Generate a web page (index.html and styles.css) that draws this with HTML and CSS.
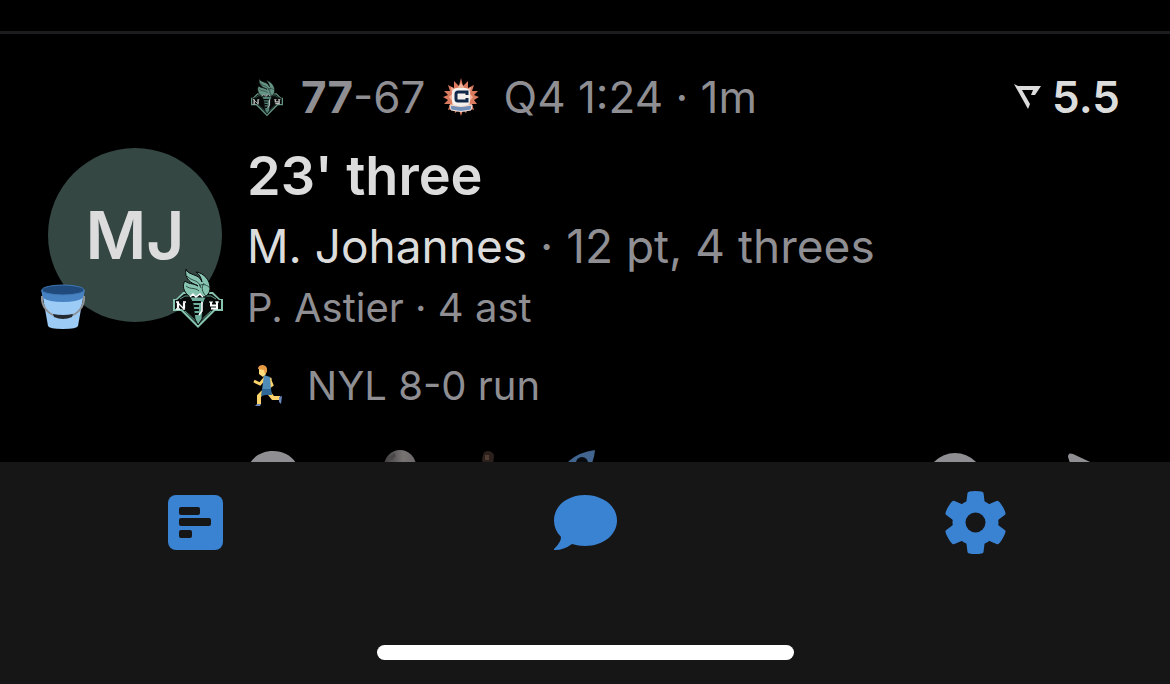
FILE: index.html
```html
<!DOCTYPE html>
<html lang="en">
<head>
<meta charset="utf-8">
<meta name="viewport" content="width=device-width, initial-scale=1">
<title>Plays</title>
<link rel="stylesheet" href="styles.css">
</head>
<body>
<svg class="defs" aria-hidden="true">
  <symbol id="liberty" viewBox="0 0 50 60">
    <path d="M10 24H40L47 31H50V43H42L25 60 8 43H0V31H3Z" fill="#86c4b0"/>
    <path d="M11 26H39L46 32H48V41H41L25 57 9 41H2V32H4Z" fill="#080a0a"/>
    <path d="M7 31L12 28H18M43 31L38 28H32M12 43L25 55 38 43" fill="none" stroke="#5c9a88"/>
    <path d="M5 40.500V34.500M11 40.500V34.500" fill="none" stroke="#fff" stroke-width="2.200"/>
    <path d="M4 34L11 41M3 34H6M10 34H13M3 41H7M10 41H12" fill="none" stroke="#fff" stroke-width="1.300"/>
    <path d="M38 34V37.500H44M44 33.500V40.500H38" fill="none" stroke="#fff" stroke-width="2"/>
    <path d="M36 34H40M42 34H46" stroke="#fff"/>
    <path d="M17 29H33L30 36 29 51 25 57 22 51 20 36Z" fill="#6fae9c" stroke="#080a0a"/>
    <path d="M19 34H28M21 38H26M21 42H26M22 46H26" stroke="#080a0a" stroke-width="2"/>
    <path d="M29 34V43L26 47" fill="none" stroke="#fff" stroke-width="1.500"/>
    <path d="M13 1C15 8 26 5 29 14C28 9 26 6 23 4C31 5 37 12 37 20C37 25 34 28 31 29L27 26 24 29 20 27 17 29C10 24 9 17 12 13C17 17 22 15 25 18C18 15 11 11 13 1Z" fill="#86c4b0" stroke="#080a0a"/>
    <path d="M14 8C19 14 26 11 28 20M26 18C30 15 34 17 37 20M31 15C28 20 29 24 33 28M13 18C18 22 22 19 26 23" fill="none" stroke="#16312b" stroke-width=".8"/>
    <path d="M17 29L20 26 23 29 27 26 30 29" fill="none" stroke="#fff" stroke-width="1.500"/>
  </symbol>
</svg>
<main class="feed">
  <div class="previous"></div>
  <article class="play">
    <div class="avatar">
      <span class="initials">MJ</span>
      <svg class="bucket" viewBox="0 0 46 46" role="img" aria-label="Bucket">
        <path d="M2 8H44L38 42Q37 45 23 45T8 42Z" fill="#9ccbf6"/>
        <path d="M1 6H45L43 14Q37 18 23 18T3 14Z" fill="#4783c3"/>
        <ellipse cx="23" cy="6" rx="21" ry="5" fill="#204a7b" stroke="#3f78b5"/>
        <path d="M2 12C1 22 8 30 16 32M44 12C45 22 38 30 30 32" fill="none" stroke="#8e9296" stroke-width="2"/>
        <path d="M13 30Q23 32 33 30L32 33Q23 37 14 33Z" fill="#252a30"/>
      </svg>
      <svg class="team-badge" role="img" aria-label="New York"><use href="#liberty"/></svg>
    </div>
    <div class="body">
      <header class="meta">
        <svg class="team home" role="img" aria-label="New York"><use href="#liberty"/></svg>
        <span class="score"><b>77</b>-67</span>
        <svg class="team away" viewBox="0 0 36 40" role="img" aria-label="Connecticut">
          <path d="M18 1L20 9 25 4 25 11 31 8 29 14 35 14 31 18 36 20 31 23 34 27 29 27 31 33 25 31 23 36 20 33 18 39 16 33 12 36 11 31 5 33 7 27 1 27 5 23 0 20 5 18 1 14 7 14 5 8 11 11 11 4 16 9Z" fill="#d9795d"/>
          <path d="M8 10L13 13 18 6 23 13 28 10 27 17 30 20 26 25 29 30H7L10 25 6 20 9 17Z" fill="#f0b49c"/>
          <rect x="9" y="11" width="18" height="18" rx="5" fill="#f4f1ed"/>
          <path d="M24 18V15H15Q13 15 13 17V22Q13 24 15 24H24V21" fill="none" stroke="#122849" stroke-width="3"/>
          <path d="M7 28Q18 31 29 28L28 33Q18 36 8 33Z" fill="#7190b9" stroke="#f2ddd5"/>
        </svg>
        <span class="clock">Q4 1:24 · 1m</span>
        <span class="impact">
          <svg class="impact-mark" viewBox="0 0 28 26" aria-hidden="true">
            <path d="M0 0L4 2H27L21 11H17L19 6H8L16 20 14 25Z" fill="#dcdcdc"/>
          </svg>
          5.5
        </span>
      </header>
      <h2 class="title">23' three</h2>
      <p class="player"><span class="name">M. Johannes</span> · 12 pt, 4 threes</p>
      <p class="assist">P. Astier · 4 ast</p>
      <p class="run">
        <svg class="runner" viewBox="0 0 30 42" aria-hidden="true">
          <path d="M12 13L7 19 1 16M17 13L18 22M16 13L19 20 15 23" fill="none" stroke="#fbd36a" stroke-width="3"/>
          <path d="M10 27L6 31 6 39M16 28L20 33H27" fill="none" stroke="#fbd36a" stroke-width="4"/>
          <path d="M11 10L17 12 18 25H9Z" fill="#4f8cba"/>
          <path d="M9 24H18L19 30 13 30 8 31Z" fill="#2f6796"/>
          <path d="M6 3H13V9L10 12 6 9Z" fill="#ffdc7c"/>
          <path d="M5 4Q5 0 10 0Q15 1 14 7L12 9 11 5Z" fill="#e79a45"/>
          <path d="M8 39L7 41H2L4 39ZM26 32L29 31 28 39 26 37Z" fill="#6c87bd"/>
        </svg>
        NYL 8-0 run
      </p>
      <div class="actions">
        <button class="act comment" aria-label="Comment"><svg viewBox="0 0 52 56"><path d="M26 1C41 1 52 11 52 25S41 49 26 49L16 47 2 54 7 42Q0 35 0 25C0 11 11 1 26 1Z" fill="#8e8e93"/></svg></button>
        <button class="act moon" aria-label="Moon"><svg viewBox="0 0 32 32"><defs><linearGradient id="moon"><stop stop-color="#3e3d3d"/><stop offset=".6" stop-color="#777372"/><stop offset="1" stop-color="#6b6867"/></linearGradient></defs><circle cx="16" cy="16" r="16" fill="url(#moon)"/><path d="M5 8L10 3 12 6 8 10Z" fill="#494747"/></svg></button>
        <button class="act person" aria-label="Player reaction"><svg viewBox="0 0 14 32"><path d="M2 5Q3 1 7 1T13 5L12 16H3L1 10Z" fill="#2c201c"/><path d="M4 5H8V10H4Z" fill="#513c33"/></svg></button>
        <button class="act rocket" aria-label="Rocket"><svg viewBox="0 0 32 32"><path d="M31 0Q30 15 20 24L14 31 0 18 5 11Q15 2 31 0Z" fill="#41658e"/><circle cx="18" cy="13" r="6" fill="#080b10"/></svg></button>
        <button class="act react" aria-label="React"><svg viewBox="0 0 58 58"><circle cx="29" cy="29" r="29" fill="#8e8e93"/></svg></button>
        <button class="act send" aria-label="Share"><svg viewBox="0 0 52 52"><path d="M0 4Q0 -1 5 1L50 22Q53 25 50 28L5 49 1 46 7 25Z" fill="#8e8e93"/></svg></button>
      </div>
    </div>
  </article>
</main>
<nav class="tabbar" aria-label="Main">
  <div class="tabs">
    <a class="tab" href="#feed" aria-label="Feed">
      <svg viewBox="0 0 64 64"><rect x="5" y="5" width="55" height="55" rx="8" fill="#3a82d2"/><g fill="#161616"><rect x="16" y="17" width="21" height="8" rx="2"/><rect x="16" y="28" width="32" height="8" rx="2"/><rect x="16" y="40" width="13" height="8" rx="2"/></g></svg>
    </a>
    <a class="tab" href="#chat" aria-label="Chat">
      <svg viewBox="0 0 64 64"><path d="M32 5C50 5 64 16 64 30.500S50 56 32 56Q25 56 19 54Q11 60 2 60C.500 60 .500 59 2 58Q8 52 8 47Q1 40 1 30.500C1 16 14 5 32 5Z" fill="#3a82d2"/></svg>
    </a>
    <a class="tab" href="#settings" aria-label="Settings">
      <svg viewBox="0 0 64 64"><defs><path id="tooth" d="M23 15L24.500 3Q24.500 1 32.500 1T40.500 3L42 15Z"/></defs><g fill="#3a82d2"><circle cx="32.500" cy="32.500" r="23"/><use href="#tooth"/><use href="#tooth" transform="rotate(60 32.500 32.500)"/><use href="#tooth" transform="rotate(120 32.500 32.500)"/><use href="#tooth" transform="rotate(180 32.500 32.500)"/><use href="#tooth" transform="rotate(240 32.500 32.500)"/><use href="#tooth" transform="rotate(300 32.500 32.500)"/></g><circle cx="32.500" cy="32.500" r="10" fill="#161616"/></svg>
    </a>
  </div>
  <div class="home-indicator"></div>
</nav>
</body>
</html>
```
FILE: styles.css
```css
* { box-sizing: border-box; }
body {
  margin: 0;
  height: 100vh;
  display: flex;
  flex-direction: column;
  background: #000;
  color: #8e8e93;
  font-family: Inter, "Liberation Sans", sans-serif;
}
svg { display: block; }
h2, p { margin: 0; }
.defs { position: absolute; width: 0; height: 0; }
.feed { flex: 1; min-height: 0; overflow: hidden; }
.previous { height: 34px; border-bottom: 3px solid #1c1c1e; }
.play {
  display: flex;
  gap: 25px;
  padding: 35px 50px 36px 48px;
}
.avatar {
  position: relative;
  flex: none;
  width: 174px;
  height: 174px;
  margin-top: 79px;
  border-radius: 50%;
  background: #344743;
  display: flex;
  align-items: center;
  justify-content: center;
}
.initials { color: #dcdcdc; font-size: 66px; font-weight: 600; }
.bucket { position: absolute; left: -8px; bottom: -8px; width: 46px; height: 46px; }
.team-badge { position: absolute; right: -1px; bottom: -6px; width: 50px; height: 60px; }
.body { flex: 1; min-width: 0; }
.meta {
  display: flex;
  align-items: center;
  height: 56px;
  margin-bottom: 15px;
  font-size: 44px;
  white-space: nowrap;
}
.team { flex: none; height: 40px; }
.home { width: 32px; margin: 0 18px 0 4px; opacity: .75; }
.away { width: 36px; margin: 0 24px 0 18px; }
.impact {
  display: flex;
  align-items: center;
  gap: 10px;
  margin-left: auto;
  color: #dcdcdc;
  font-weight: 600;
}
.impact-mark { width: 28px; height: 26px; }
.title { color: #dcdcdc; font-size: 54px; line-height: 72px; font-weight: 600; }
.player { font-size: 46px; line-height: 68px; }
.name { color: #dcdcdc; }
.assist { font-size: 40px; line-height: 56px; }
.run {
  display: flex;
  align-items: center;
  gap: 24px;
  margin-top: 22px;
  padding-left: 6px;
  font-size: 40px;
  line-height: 56px;
}
.runner { width: 30px; height: 42px; }
.actions { display: flex; align-items: flex-start; margin-top: 36px; }
.act { flex: none; padding: 0; border: 0; background: none; }
.comment { width: 52px; margin-right: 85px; }
.moon { width: 32px; margin-right: 65px; }
.person { width: 14px; margin-right: 69px; }
.rocket { width: 32px; }
.react { width: 58px; margin: 3px 84px 0 auto; }
.send { width: 52px; padding-top: 3px; }
.tabbar {
  flex: none;
  display: flex;
  flex-direction: column;
  align-items: center;
  justify-content: space-between;
  height: 222px;
  padding: 28px 0 24px;
  background: #161616;
}
.tabs { display: grid; grid-template-columns: repeat(3, 1fr); width: 100%; }
.tab { display: flex; justify-content: center; }
.tab svg { width: 64px; height: 64px; }
.home-indicator { width: 417px; height: 15px; border-radius: 8px; background: #fff; }
```
